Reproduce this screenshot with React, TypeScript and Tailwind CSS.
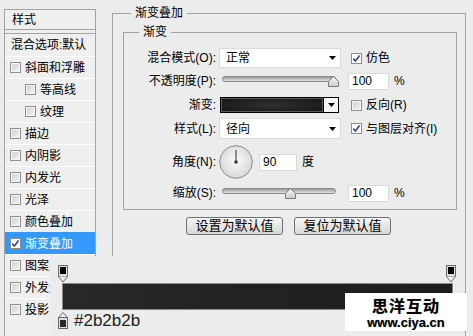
import React from "react";

function Check({ checked = false }: { checked?: boolean }) {
  return (
    <span
      className={
        checked
          ? "flex h-[11px] w-[11px] shrink-0 items-center justify-center border border-[#8f8f8f] bg-white"
          : "flex h-[11px] w-[11px] shrink-0 items-center justify-center border border-[#8f8f8f] bg-linear-to-br from-[#cfcfcf] to-[#f4f4f4] shadow-[inset_0_0_0_1px_#f6f6f6]"
      }
    >
      {checked && (
        <svg width="9" height="9" viewBox="0 0 9 9">
          <path d="M1.3 4.6 L3.4 7 L7.6 1.6" fill="none" stroke="#34449a" strokeWidth="1.6" />
        </svg>
      )}
    </span>
  );
}

function Tri() {
  return (
    <svg width="7" height="4" viewBox="0 0 7 4" className="shrink-0">
      <path d="M0 0 H7 L3.5 4 Z" fill="#000" />
    </svg>
  );
}

function Label({ children }: { children: React.ReactNode }) {
  return <div className="w-[92px] shrink-0 text-right">{children}</div>;
}

function Thumb({ left }: { left: number }) {
  return (
    <svg className="absolute top-0" style={{ left }} width="11" height="11" viewBox="0 0 11 11">
      <defs>
        <linearGradient id={`tg${left}`} x1="0" y1="0" x2="0" y2="1">
          <stop offset="0" stopColor="#f6f6f6" />
          <stop offset="1" stopColor="#cdcdcd" />
        </linearGradient>
      </defs>
      <path d="M0.5 10.5 V5.5 L5.5 0.5 L10.5 5.5 V10.5 Z" fill={`url(#tg${left})`} stroke="#7a7a7a" />
    </svg>
  );
}

function Slider({ thumb }: { thumb: number }) {
  return (
    <div className="relative ml-[3px] h-[11px] w-[114px] shrink-0">
      <div className="h-[6px] w-full rounded-full border border-[#8a8a8a] bg-linear-to-b from-[#999999] to-[#e4e4e4]" />
      <Thumb left={thumb} />
    </div>
  );
}

function Input({ value, cls }: { value: string; cls: string }) {
  return (
    <div className={`flex h-[17px] items-center border border-[#dadada] bg-white pl-[3px] ${cls}`}>{value}</div>
  );
}

function TopStop() {
  return (
    <svg width="10" height="18" viewBox="0 0 10 18">
      <rect x="0.5" y="0.5" width="9" height="11" fill="#dedede" stroke="#6a6a6a" />
      <rect x="2" y="2" width="6" height="7" fill="#000" />
      <path d="M0.5 11.5 L5 17 L9.5 11.5" fill="#f0f0f0" stroke="#6a6a6a" />
    </svg>
  );
}

function BottomStop() {
  return (
    <svg width="10" height="17" viewBox="0 0 10 17">
      <path d="M0.5 5.5 L5 0.5 L9.5 5.5" fill="#f0f0f0" stroke="#6a6a6a" />
      <rect x="0.5" y="5.5" width="9" height="11" fill="#dedede" stroke="#6a6a6a" />
      <rect x="2" y="8" width="6" height="7" fill="#2b2b2b" />
    </svg>
  );
}

const rows: { t: string; indent?: boolean; checked?: boolean; selected?: boolean }[] = [
  { t: "斜面和浮雕" },
  { t: "等高线", indent: true },
  { t: "纹理", indent: true },
  { t: "描边" },
  { t: "内阴影" },
  { t: "内发光" },
  { t: "光泽" },
  { t: "颜色叠加" },
  { t: "渐变叠加", checked: true, selected: true },
  { t: "图案叠加" },
  { t: "外发光" },
  { t: "投影" },
];

export default function App() {
  return (
    <div className="relative h-[336px] w-[473px] overflow-hidden bg-[#ececec] text-[12px] leading-[14px] text-black [font-family:'Liberation_Sans','Noto_Sans_CJK_SC',sans-serif]">
      <div className="flex items-start">
        {/* Left styles list */}
        <div className="ml-[4px] mt-[9px] flex h-[340px] w-[92px] shrink-0 flex-col border border-[#a3a3a3] bg-[#efefef]">
          <div className="flex h-[20px] shrink-0 items-center border-b border-[#a3a3a3] pl-[7px]">样式</div>
          <div className="h-[3px] shrink-0" />
          <div className="flex h-[23px] shrink-0 items-center border-t border-[#a3a3a3] pl-[6px]">混合选项:默认</div>
          {rows.map((r) => (
            <div
              key={r.t}
              className={
                r.selected
                  ? "flex h-[22px] shrink-0 items-center border-t border-[#3399ff] bg-[#3399ff] text-white"
                  : "flex h-[22px] shrink-0 items-center border-t border-white"
              }
            >
              <div className={r.indent ? "ml-[20px]" : "ml-[5px]"}>
                <Check checked={r.checked} />
              </div>
              <span className="ml-[4px] whitespace-nowrap">{r.t}</span>
            </div>
          ))}
        </div>

        {/* Right: gradient overlay settings */}
        <fieldset className="ml-[16px] mt-[6px] h-[340px] w-[354px] min-w-0 shrink-0 border border-[#a3a3a3]">
          <legend className="ml-[18px] h-[15px] px-[4px] leading-[15px]">渐变叠加</legend>
          <fieldset className="ml-[10px] mt-[4px] w-[334px] min-w-0 border border-[#a3a3a3] pb-[7px]">
            <legend className="ml-[15px] h-[15px] px-[4px] leading-[15px]">渐变</legend>

            <div className="mt-[8px] flex h-[20px] items-center">
              <Label>混合模式(O):</Label>
              <div className="ml-[3px] flex h-[20px] w-[122px] shrink-0 items-center justify-between border border-[#dadada] bg-white pl-[6px] pr-[4px]">
                <span>正常</span>
                <Tri />
              </div>
              <div className="ml-[10px] flex items-center">
                <Check checked />
                <span className="ml-[4px]">仿色</span>
              </div>
            </div>

            <div className="mt-[3px] flex h-[20px] items-center">
              <Label>不透明度(P):</Label>
              <div className="ml-[3px] flex w-[122px] shrink-0 items-center">
                <Slider thumb={106} />
              </div>
              <Input value="100" cls="ml-[7px] w-[41px]" />
              <span className="ml-[5px]">%</span>
            </div>

            <div className="mt-[6px] flex h-[16px] items-center">
              <Label>渐变:</Label>
              <div className="ml-[4px] flex h-[16px] w-[119px] shrink-0 border border-black">
                <div className="flex-1 bg-[radial-gradient(ellipse_at_center,#303030,#141414)] shadow-[inset_0_0_0_1px_#5a5a5a]" />
                <div className="flex w-[15px] items-center justify-center border-l border-black bg-[#f5f5f5]">
                  <Tri />
                </div>
              </div>
              <div className="ml-[12px] flex items-center">
                <Check />
                <span className="ml-[4px]">反向(R)</span>
              </div>
            </div>

            <div className="mt-[5px] flex h-[21px] items-center">
              <Label>样式(L):</Label>
              <div className="ml-[3px] flex h-[21px] w-[122px] shrink-0 items-center justify-between border border-[#dadada] bg-white pl-[6px] pr-[4px]">
                <span>径向</span>
                <Tri />
              </div>
              <div className="ml-[10px] flex items-center">
                <Check checked />
                <span className="ml-[4px]">与图层对齐(I)</span>
              </div>
            </div>

            <div className="mt-[6px] flex h-[34px] items-center">
              <Label>角度(N):</Label>
              <svg className="ml-[3px] shrink-0" width="34" height="34" viewBox="0 0 34 34">
                <defs>
                  <radialGradient id="dialg" cx="50%" cy="45%" r="55%">
                    <stop offset="0" stopColor="#fbfbfb" />
                    <stop offset="1" stopColor="#d8d8d8" />
                  </radialGradient>
                </defs>
                <circle cx="17" cy="17" r="16.3" fill="url(#dialg)" stroke="#8c8c8c" />
                <line x1="17" y1="17" x2="17" y2="5" stroke="#4a4a4a" strokeWidth="1.2" />
                <circle cx="17" cy="17" r="1.8" fill="#3a3a3a" />
              </svg>
              <Input value="90" cls="ml-[6px] w-[38px]" />
              <span className="ml-[5px]">度</span>
            </div>

            <div className="mt-[5px] flex h-[18px] items-center">
              <Label>缩放(S):</Label>
              <div className="ml-[3px] flex w-[122px] shrink-0 items-center">
                <Slider thumb={63} />
              </div>
              <Input value="100" cls="ml-[7px] w-[41px]" />
              <span className="ml-[5px]">%</span>
            </div>
          </fieldset>

          <div className="ml-[73px] mt-[7px] flex gap-[11px]">
            <button className="h-[18px] w-[97px] rounded-[3px] border border-[#707070] bg-linear-to-b from-[#f5f5f5] to-[#d8d8d8] text-[13px] leading-[16px]">
              设置为默认值
            </button>
            <button className="h-[18px] w-[97px] rounded-[3px] border border-[#707070] bg-linear-to-b from-[#f5f5f5] to-[#d8d8d8] text-[13px] leading-[16px]">
              复位为默认值
            </button>
          </div>
        </fieldset>
      </div>

      {/* Gradient editor overlay */}
      <div className="absolute left-[50px] top-[256px] h-[80px] w-[415px] bg-[#ececec] pl-[8px] pt-[9px]">
        <div className="flex w-[398px] justify-between">
          <TopStop />
          <TopStop />
        </div>
        <div className="ml-[4px] h-[27px] w-[391px] border border-[#8a8a8a] bg-linear-to-r from-[#282828] to-[#1c1c1c]" />
        <div className="mt-[2px] flex items-center">
          <BottomStop />
          <span className="ml-[6px] text-[17px] leading-[17px] text-[#222]">#2b2b2b</span>
        </div>
      </div>

      {/* Watermark */}
      <div className="absolute left-[345px] top-[293px] flex h-[38px] w-[122px] flex-col items-center bg-white pt-[6px]">
        <span className="text-[16px] font-bold leading-[16px] tracking-[1px] text-black [text-shadow:0_0_1px_#888]">思洋互动</span>
        <span className="mt-[1px] text-[13px] font-bold leading-[13px] text-black [text-shadow:0_0_1px_#888]">www.ciya.cn</span>
      </div>
    </div>
  );
}
